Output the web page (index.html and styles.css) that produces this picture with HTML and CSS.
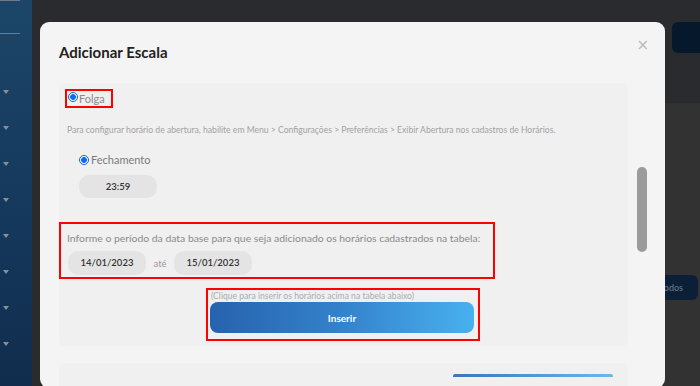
FILE: index.html
```html
<!DOCTYPE html>
<html lang="pt-BR">
<head>
<meta charset="utf-8">
<title>Adicionar Escala</title>
<link rel="stylesheet" href="styles.css">
</head>
<body>
<div class="app">
  <aside class="sidebar">
    <span class="side-line"></span>
    <span class="side-line second"></span>
    <ul class="side-menu">
      <li class="caret"></li>
      <li class="caret"></li>
      <li class="caret"></li>
      <li class="caret"></li>
      <li class="caret"></li>
      <li class="caret"></li>
      <li class="caret"></li>
      <li class="caret"></li>
    </ul>
  </aside>
  <main class="page">
    <div class="topbar"><span class="top-btn"></span></div>
    <div class="content">
      <span class="todos-btn">Todos</span>
    </div>
  </main>
</div>

<div class="modal">
  <div class="modal-head">
    <h2 class="modal-title">Adicionar Escala</h2>
    <span class="modal-close">&times;</span>
  </div>
  <div class="modal-body">
    <div class="scroll-content">
      <section class="panel">
        <label class="folga-box"><span class="radio"></span><span class="folga-text">Folga</span></label>
        <p class="help">Para configurar horário de abertura, habilite em Menu &gt; Configurações &gt; Preferências &gt; Exibir Abertura nos cadastros de Horários.</p>
        <label class="fech-row"><span class="radio"></span><span class="fech-text">Fechamento</span></label>
        <div class="time-box">23:59</div>
        <div class="period-box">
          <p class="period-text">Informe o período da data base para que seja adicionado os horários cadastrados na tabela:</p>
          <div class="date-row">
            <span class="date-box">14/01/2023</span>
            <span class="ate">até</span>
            <span class="date-box">15/01/2023</span>
          </div>
        </div>
        <div class="insert-box">
          <p class="insert-hint">(Clique para inserir os horários acima na tabela abaixo)</p>
          <button class="insert-btn">Inserir</button>
        </div>
      </section>
      <section class="panel panel2">
        <span class="panel2-btn"></span>
      </section>
    </div>
    <div class="scrollbar"><span class="thumb"></span></div>
  </div>
</div>
</body>
</html>
```

FILE: styles.css
```css
* { box-sizing: border-box; }
html, body {
  margin: 0;
  padding: 0;
  width: 700px;
  height: 386px;
  overflow: hidden;
  font-family: Lato, "Open Sans", sans-serif;
  background: #2b2b2b;
}
.app {
  display: flex;
  width: 700px;
  height: 386px;
}
.sidebar {
  width: 32px;
  flex: none;
  background: linear-gradient(180deg, #1c4668 0%, #153a5e 50%, #112c4d 100%);
  display: flex;
  flex-direction: column;
}
.side-line {
  display: block;
  width: 20px;
  height: 1px;
  background: #6f7a86;
}
.side-line.second { margin-top: 32px; }
.side-menu {
  list-style: none;
  margin: 56px 0 0;
  padding: 0;
  display: flex;
  flex-direction: column;
  gap: 32px;
}
.caret {
  width: 0;
  height: 0;
  margin-left: 3px;
  border-left: 3px solid transparent;
  border-right: 3px solid transparent;
  border-top: 4px solid #8a8f96;
}
.page {
  flex: 1;
  display: flex;
  flex-direction: column;
  background: #2b2b2b;
}
.topbar {
  height: 103px;
  background: #2a2b2e;
  display: flex;
  justify-content: flex-end;
  padding-top: 22px;
}
.top-btn {
  width: 40px;
  height: 31px;
  margin-right: -12px;
  border-radius: 6px;
  background: #06182b;
}
.content {
  flex: 1;
  margin-left: 40px;
  background: #323232;
  display: flex;
  justify-content: flex-end;
  align-items: flex-start;
  padding-top: 172px;
}
.todos-btn {
  width: 60px;
  height: 25px;
  margin-right: 2px;
  border-radius: 6px;
  background: #0b2036;
  color: #6c7f92;
  font-size: 9px;
  line-height: 25px;
  text-align: right;
  padding-right: 15px;
}

/* Modal (overlay) */
.modal {
  position: absolute;
  left: 40px;
  top: 22px;
  width: 625px;
  height: 366px;
  background: #f4f4f4;
  border-radius: 9px;
  padding: 20px 16px 0 19px;
  overflow: hidden;
}
.modal-head {
  display: flex;
  justify-content: space-between;
  align-items: flex-start;
  height: 20px;
}
.modal-title {
  margin: 0;
  font-size: 15px;
  line-height: 20px;
  font-weight: 700;
  color: #222;
}
.modal-close {
  color: #b9b9b9;
  font-size: 15px;
  line-height: 14px;
  margin-top: -4px;
  margin-right: 0;
  font-family: "DejaVu Sans", sans-serif;
}
.modal-body {
  display: flex;
  margin-top: 21px;
}
.scroll-content {
  width: 569px;
  display: flex;
  flex-direction: column;
  gap: 17px;
}
.panel {
  background: #f0f0f0;
  border-radius: 6px;
  padding: 6px 0 5px 0;
  display: flex;
  flex-direction: column;
  align-items: flex-start;
}
.radio {
  width: 10px;
  height: 10px;
  border-radius: 50%;
  border: 1px solid #0a62d8;
  background: radial-gradient(circle, #0b6cf3 0 2.6px, #ffffff 3.2px);
  flex: none;
}
.folga-box {
  margin-left: 6px;
  width: 48px;
  height: 19px;
  border: 2px solid #ff0000;
  display: flex;
  align-items: flex-start;
  padding: 1px 0 0 1px;
  gap: 1px;
}
.folga-text {
  color: #8a8a8a;
  font-size: 11px;
  line-height: 12px;
  margin-top: 1px;
}
.help {
  margin: 16px 0 0 8px;
  font-size: 8.6px;
  line-height: 12px;
  color: #a2a2a2;
}
.fech-row {
  margin: 17px 0 0 20px;
  display: flex;
  align-items: center;
  gap: 2px;
  height: 14px;
}
.fech-text {
  color: #7a7a7a;
  font-size: 11px;
  line-height: 14px;
}
.time-box {
  margin: 8px 0 0 20px;
  width: 78px;
  height: 23px;
  border-radius: 10px;
  background: #e4e4e4;
  color: #333;
  font-size: 9.5px;
  font-weight: 600;
  line-height: 23px;
  text-align: center;
}
.period-box {
  margin-top: 24px;
  width: 436px;
  height: 57px;
  border: 2px solid #ff0000;
  padding: 7px 0 0 6px;
}
.period-text {
  margin: 0;
  font-size: 10.4px;
  line-height: 14px;
  color: #8a8a8a;
}
.date-row {
  display: flex;
  align-items: center;
  margin-top: 6px;
  margin-left: 1px;
}
.date-box {
  width: 78px;
  height: 24px;
  border-radius: 10px;
  background: #e4e4e4;
  color: #333;
  font-size: 9.5px;
  font-weight: 600;
  line-height: 24px;
  text-align: center;
}
.ate {
  width: 28px;
  text-align: center;
  font-size: 9.5px;
  color: #9a9a9a;
}
.insert-box {
  margin: 9px 0 0 147px;
  width: 274px;
  height: 53px;
  border: 2px solid #ff0000;
  padding: 1px 4px 0 2px;
}
.insert-hint {
  margin: 0 0 0 1px;
  font-size: 8.6px;
  line-height: 11px;
  color: #acacac;
}
.insert-btn {
  display: block;
  width: 264px;
  height: 31px;
  border: 0;
  border-radius: 8px;
  background: linear-gradient(90deg, #2762ad 0%, #3482cc 50%, #48b1ef 100%);
  color: #fff;
  font-family: Lato, "Open Sans", sans-serif;
  font-size: 10px;
  font-weight: 700;
  padding: 0;
}
.panel2 {
  height: 40px;
  padding: 11px 0 0 394px;
}
.panel2-btn {
  display: block;
  width: 160px;
  height: 3px;
  border-radius: 2px 2px 0 0;
  background: linear-gradient(90deg, #3a76b8 0%, #6bb8ea 100%);
}
.scrollbar {
  margin-left: 9px;
  width: 10px;
  padding-top: 84px;
}
.thumb {
  display: block;
  width: 10px;
  height: 85px;
  border-radius: 5px;
  background: #9b9b9b;
}
```
